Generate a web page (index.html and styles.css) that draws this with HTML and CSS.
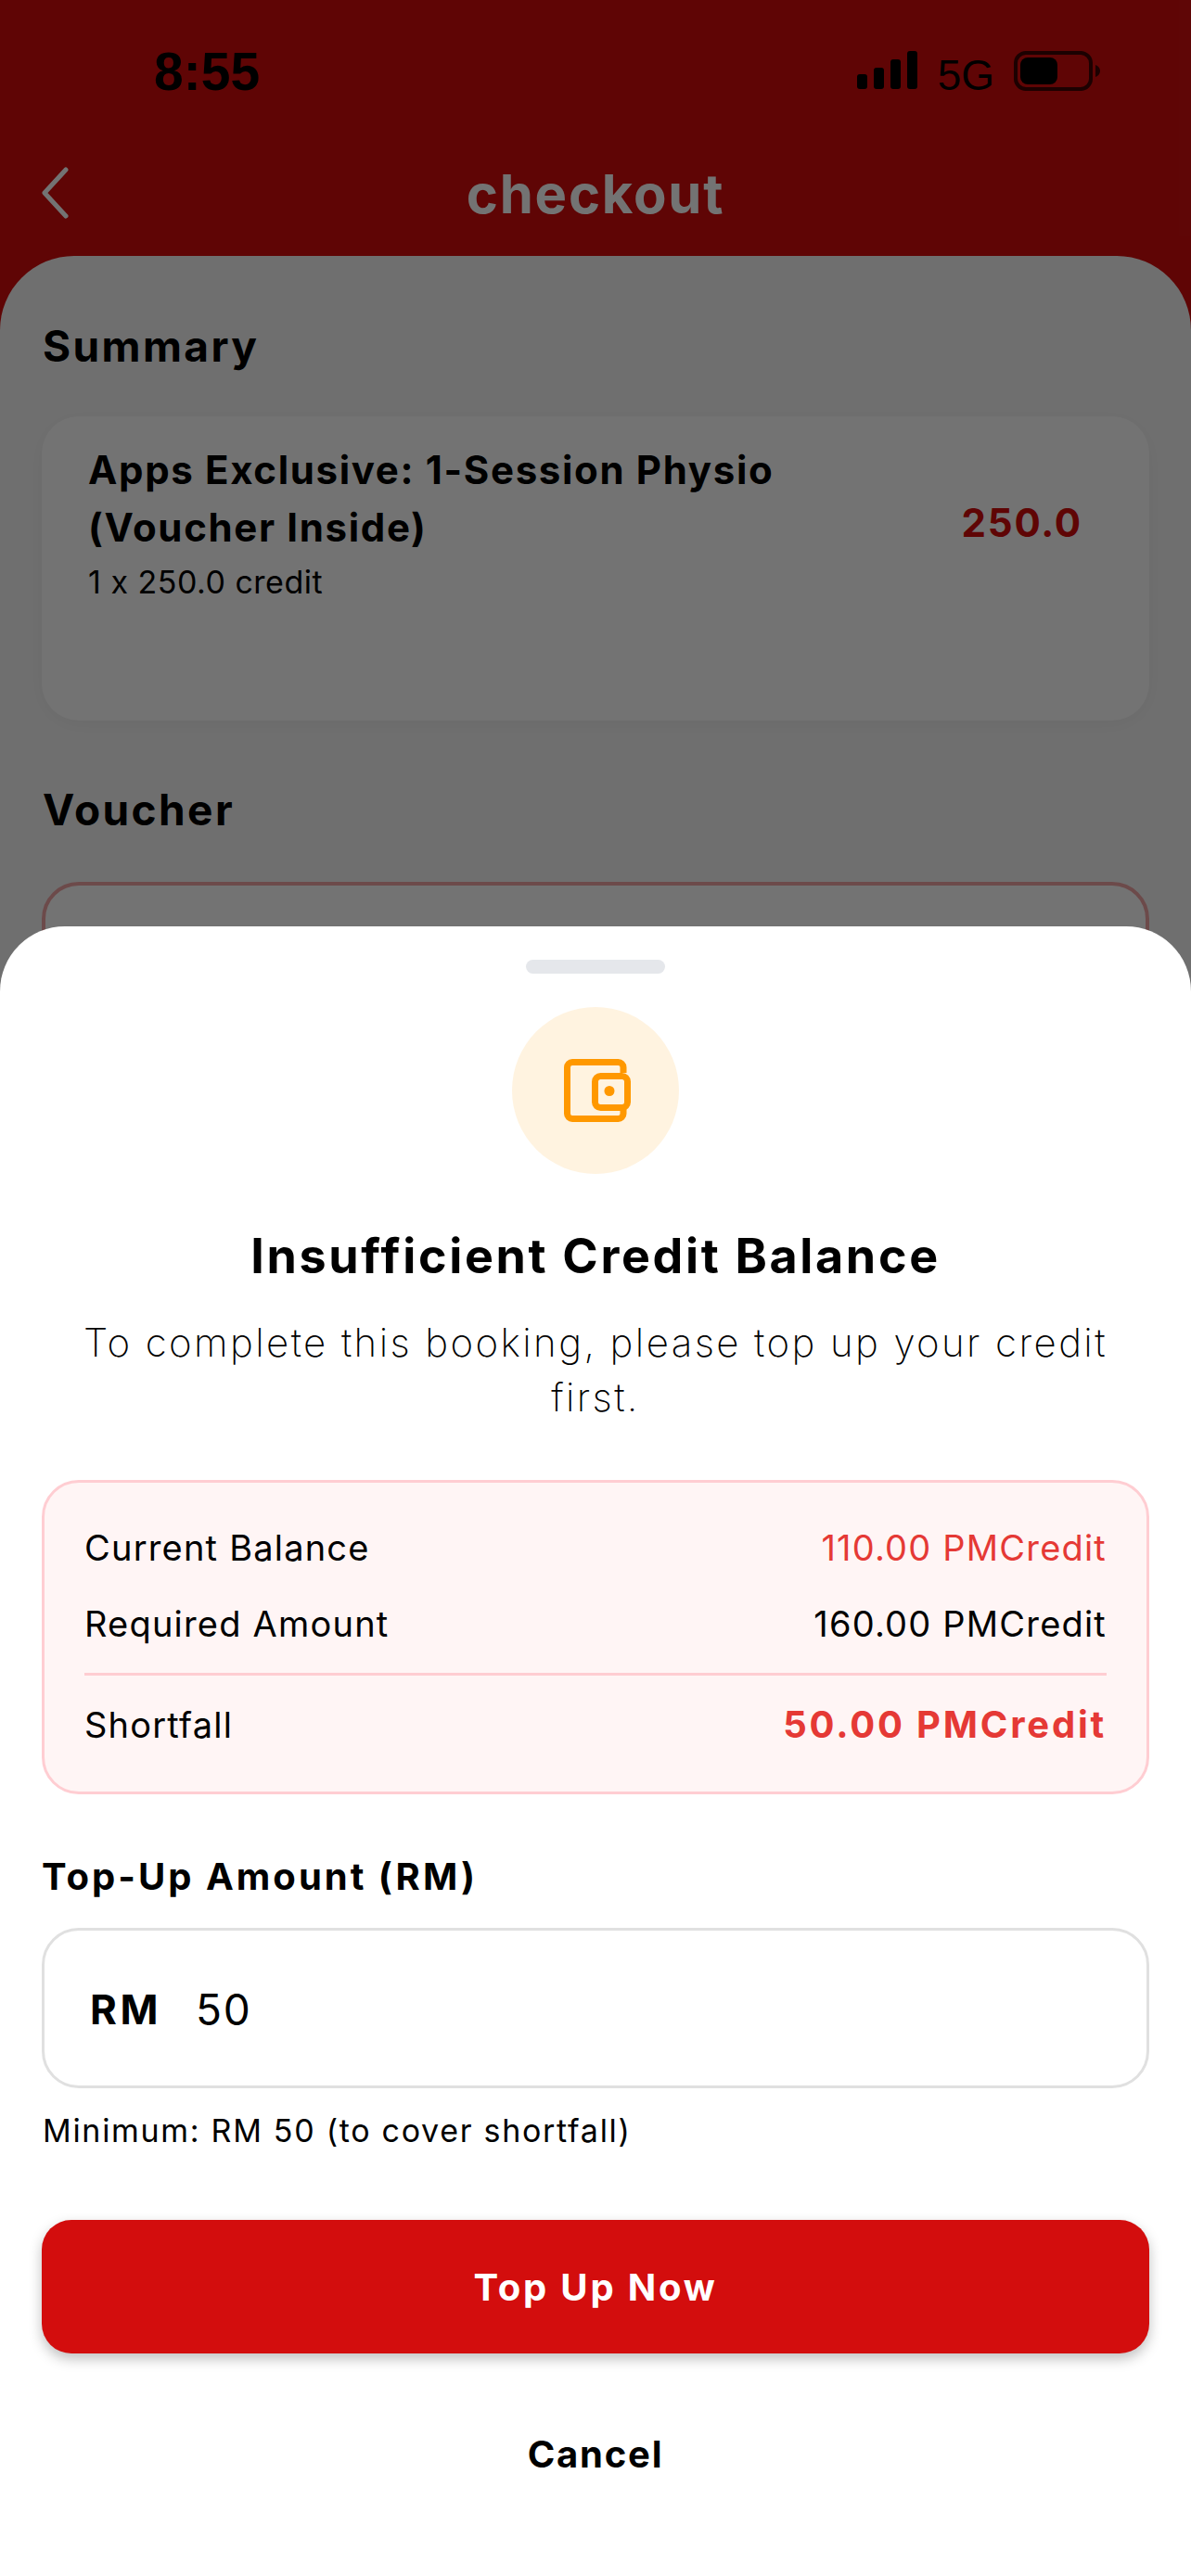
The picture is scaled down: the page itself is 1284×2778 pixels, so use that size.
FILE: index.html
```html
<!DOCTYPE html>
<html lang="en">
<head>
    <meta charset="utf-8">
    <title>Checkout</title>
    <link rel="stylesheet" href="styles.css">
</head>
<body>
    <div class="screen">
        <header class="top">
            <div class="status">
                <span class="time">8:55</span>
                <div class="status-right">
                    <svg class="signal" width="65" height="41" viewBox="0 0 65 41">
                        <rect x="0" y="25" width="11" height="16" rx="3"/>
                        <rect x="18" y="18" width="11" height="23" rx="3"/>
                        <rect x="36" y="9" width="11" height="32" rx="3"/>
                        <rect x="54" y="0" width="11" height="41" rx="3"/>
                    </svg>
                    <span class="network">5G</span>
                    <svg class="battery" width="93" height="43" viewBox="0 0 93 43">
                        <rect x="2" y="2" width="81" height="39" rx="11" fill="none" stroke="#3e0303" stroke-width="4"/>
                        <rect x="7" y="7" width="40" height="29" rx="8"/>
                        <path d="M88 15c3 1 5 3.500 5 6.500s-2 5.500-5 6.500z" fill="#3e0303"/>
                    </svg>
                </div>
            </div>
            <div class="nav">
                <svg class="back" width="32" height="56" viewBox="0 0 32 56">
                    <path d="M28 3L5 28l23 25" fill="none" stroke="#fff" stroke-width="5" stroke-linecap="round" stroke-linejoin="round"/>
                </svg>
                <h1 class="nav-title">checkout</h1>
            </div>
        </header>

        <main class="content">
            <h2 class="section-title">Summary</h2>
            <div class="summary-card">
                <div class="summary-info">
                    <div class="item-name">Apps Exclusive: 1-Session Physio (Voucher Inside)</div>
                    <div class="item-qty">1 x 250.0 credit</div>
                </div>
                <div class="item-price">250.0</div>
            </div>
            <h2 class="section-title voucher-title">Voucher</h2>
            <div class="voucher-box"></div>
        </main>

        <div class="overlay"></div>

        <section class="sheet">
            <div class="handle"></div>
            <div class="icon-circle">
                <svg width="72" height="68" viewBox="0 0 72 68" fill="none" stroke="#ff9800" stroke-width="7">
                    <path d="M64 15V9a5.500 5.500 0 0 0-5.500-5.500H9A5.500 5.500 0 0 0 3.500 9v50A5.500 5.500 0 0 0 9 64.500h49.500A5.500 5.500 0 0 0 64 59v-6"/>
                    <rect x="33.500" y="18.500" width="35" height="34" rx="6"/>
                    <circle cx="49" cy="34.500" r="5.500" fill="#ff9800" stroke="none"/>
                </svg>
            </div>
            <h2 class="sheet-title">Insufficient Credit Balance</h2>
            <p class="sheet-desc">To complete this booking, please top up your credit first.</p>

            <div class="balance-box">
                <div class="balance-row">
                    <span>Current Balance</span>
                    <span class="red">110.00 PMCredit</span>
                </div>
                <div class="balance-row">
                    <span>Required Amount</span>
                    <span>160.00 PMCredit</span>
                </div>
                <div class="balance-row last">
                    <span>Shortfall</span>
                    <span class="red strong">50.00 PMCredit</span>
                </div>
            </div>

            <div class="amount-label">Top-Up Amount (RM)</div>
            <div class="amount-input">
                <span class="currency">RM</span>
                <span class="amount-value">50</span>
            </div>
            <div class="amount-hint">Minimum: RM 50 (to cover shortfall)</div>

            <button class="topup-btn" type="button">Top Up Now</button>
            <button class="cancel-btn" type="button">Cancel</button>
        </section>
    </div>
</body>
</html>
```

FILE: styles.css
```css
* {
    margin: 0;
    box-sizing: border-box;
}

body {
    font-family: Inter, "Liberation Sans", sans-serif;
    font-feature-settings: "calt" 0;
    color: #000;
    background: #fff;
}

.screen {
    position: relative;
    width: 1284px;
    height: 2778px;
    overflow: hidden;
    display: flex;
    flex-direction: column;
    background: #d30d0d;
}

/* top red area */
.top {
    height: 276px;
    padding-top: 55px;
    flex-shrink: 0;
}

.status {
    display: flex;
    justify-content: space-between;
    align-items: flex-start;
    height: 44px;
    padding: 0 98px 0 166px;
}

.time {
    font-family: "Liberation Sans", sans-serif;
    font-size: 57px;
    font-weight: 700;
    line-height: 44px;
}

.status-right {
    display: flex;
    align-items: flex-start;
}

.network {
    font-family: "Liberation Sans", sans-serif;
    font-size: 46px;
    line-height: 44px;
    margin: 4px 21px 0 22px;
}

.nav {
    position: relative;
    display: flex;
    justify-content: center;
    align-items: center;
    height: 60px;
    margin-top: 80px;
}

.back {
    position: absolute;
    left: 43px;
    top: 1px;
}

.nav-title {
    font-size: 58px;
    font-weight: 700;
    line-height: 60px;
    letter-spacing: 1.800px;
    color: #fff;
}

/* page behind the sheet */
.content {
    flex: 1;
    padding: 74px 45px 0;
    background: #f7f7f7;
    border-radius: 80px 80px 0 0;
}

.section-title {
    font-size: 46px;
    font-weight: 700;
    line-height: 46px;
    letter-spacing: 2.400px;
    margin-left: 1px;
}

.summary-card {
    display: flex;
    justify-content: space-between;
    align-items: flex-start;
    height: 328px;
    margin-top: 53px;
    padding: 27px 72px 0 50px;
    background: #fff;
    border-radius: 40px;
    box-shadow: 0 4px 24px rgba(0, 0, 0, 0.05);
}

.summary-info {
    width: 800px;
}

.item-name {
    font-size: 42px;
    font-weight: 700;
    line-height: 62px;
    letter-spacing: 1.650px;
}

.item-qty {
    font-size: 34px;
    line-height: 40px;
    letter-spacing: 0.500px;
    margin-top: 8px;
}

.item-price {
    font-size: 42px;
    font-weight: 700;
    line-height: 50px;
    letter-spacing: 1.800px;
    color: #d30d0d;
    margin-top: 63px;
}

.voucher-title {
    margin-top: 73px;
}

.voucher-box {
    height: 200px;
    margin-top: 55px;
    border: 4px solid #f0a5a5;
    border-radius: 40px;
    background: #fff;
}

.overlay {
    position: absolute;
    inset: 0;
    background: rgba(0, 0, 0, 0.55);
}

/* bottom sheet */
.sheet {
    position: absolute;
    left: 0;
    right: 0;
    bottom: 0;
    height: 1779px;
    padding: 36px 45px 0;
    background: #fff;
    border-radius: 70px 70px 0 0;
    display: flex;
    flex-direction: column;
    align-items: center;
}

.handle {
    width: 150px;
    height: 15px;
    border-radius: 8px;
    background: #e5e7eb;
}

.icon-circle {
    display: flex;
    align-items: center;
    justify-content: center;
    width: 180px;
    height: 180px;
    margin-top: 36px;
    padding-left: 4px;
    border-radius: 50%;
    background: #fff3e0;
}

.sheet-title {
    font-size: 52px;
    font-weight: 700;
    line-height: 64px;
    letter-spacing: 2.650px;
    margin-top: 57px;
}

.sheet-desc {
    width: 1120px;
    font-size: 42px;
    font-weight: 200;
    line-height: 59px;
    letter-spacing: 2.400px;
    text-align: center;
    margin-top: 31px;
}

.balance-box {
    width: 100%;
    height: 339px;
    margin-top: 60px;
    padding: 48px 43px 0;
    background: #fff5f5;
    border: 3px solid #ffcdd2;
    border-radius: 40px;
}

.balance-row {
    display: flex;
    justify-content: space-between;
    font-size: 38px;
    line-height: 44px;
    letter-spacing: 1.200px;
    margin-bottom: 38px;
}

.balance-row.last {
    border-top: 3px solid #ffcdd2;
    margin-top: -7px;
    padding-top: 31px;
    margin-bottom: 0;
}

.red {
    color: #e53935;
}

.strong {
    font-weight: 700;
    font-size: 40px;
    letter-spacing: 2.800px;
}

.amount-label {
    align-self: flex-start;
    font-size: 40px;
    font-weight: 700;
    line-height: 48px;
    letter-spacing: 3px;
    margin-top: 65px;
}

.amount-input {
    display: flex;
    align-items: center;
    width: 100%;
    height: 173px;
    margin-top: 31px;
    padding: 0 49px;
    border: 3px solid #e0e0e0;
    border-radius: 40px;
}

.currency {
    font-size: 44px;
    font-weight: 700;
    letter-spacing: 3.500px;
    margin-top: 2px;
}

.amount-value {
    font-size: 46px;
    letter-spacing: 2px;
    margin-left: 37px;
    margin-top: 2px;
}

.amount-hint {
    align-self: flex-start;
    font-size: 34px;
    line-height: 40px;
    letter-spacing: 1.700px;
    margin-top: 26px;
    margin-left: 1px;
}

.topup-btn {
    width: 100%;
    height: 144px;
    margin-top: 76px;
    border: none;
    border-radius: 32px;
    background: #d30d0d;
    color: #fff;
    font-family: inherit;
    font-feature-settings: inherit;
    font-size: 40px;
    font-weight: 700;
    letter-spacing: 2.800px;
    box-shadow: 0 6px 14px rgba(0, 0, 0, 0.25);
}

.cancel-btn {
    margin-top: 85px;
    border: none;
    background: none;
    color: #000;
    font-family: inherit;
    font-size: 40px;
    font-weight: 700;
    line-height: 48px;
    letter-spacing: 1.800px;
    padding: 0;
}
```
